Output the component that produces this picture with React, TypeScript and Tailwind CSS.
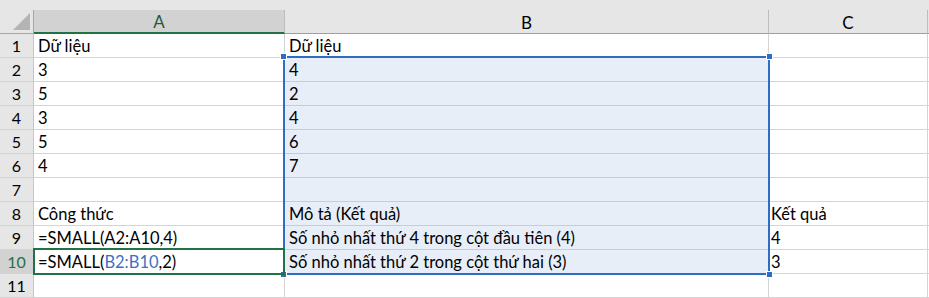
const rows: { a: React.ReactNode; b: string; c: string }[] = [
  { a: "Dữ liệu", b: "Dữ liệu", c: "" },
  { a: "3", b: "4", c: "" },
  { a: "5", b: "2", c: "" },
  { a: "3", b: "4", c: "" },
  { a: "5", b: "6", c: "" },
  { a: "4", b: "7", c: "" },
  { a: "", b: "", c: "" },
  { a: "Công thức", b: "Mô tả (Kết quả)", c: "Kết quả" },
  { a: "=SMALL(A2:A10,4)", b: "Số nhỏ nhất thứ 4 trong cột đầu tiên (4)", c: "4" },
  {
    a: (
      <>
        =SMALL(<span className="text-[#3f6fc5]">B2:B10</span>,2)
      </>
    ),
    b: "Số nhỏ nhất thứ 2 trong cột thứ hai (3)",
    c: "3",
  },
  { a: "", b: "", c: "" },
];

// small square grip on a range corner
const Handle = ({ pos }: { pos: string }) => (
  <div className={"absolute w-[7px] h-[7px] bg-[#2f6cc4] border border-white " + pos} />
);

const App = () => {
  return (
    <div className="relative w-[929px] h-[298px] bg-white overflow-hidden font-['Lato','Liberation_Sans',sans-serif] text-black">
      {/* ribbon edge above the headers */}
      <div className="h-[10px] bg-[#e6e6e6]" />

      <div className="grid grid-cols-[34px_251px_484px_159px_1px]">
        {/* corner */}
        <div className="h-[24px] bg-[#e6e6e6] border-r border-b border-[#a6a6a6] flex items-start justify-end pr-[3px] pt-[3px]">
          <svg width="17" height="17" viewBox="0 0 17 17">
            <polygon points="17,0 17,17 0,17" fill="#b4b4b4" />
          </svg>
        </div>
        <div className="h-[24px] bg-[#d2d2d2] border-r border-[#bdbdbd] border-b-2 border-b-[#217346] flex items-center justify-center text-[17px] text-[#1f5c3a] pt-[1px]">
          A
        </div>
        <div className="h-[24px] bg-[#e6e6e6] border-r border-b border-[#bdbdbd] border-b-[#9f9f9f] flex items-center justify-center text-[17px] pt-[2px]">
          B
        </div>
        <div className="h-[24px] bg-[#e6e6e6] border-r border-b border-[#bdbdbd] border-b-[#9f9f9f] flex items-center justify-center text-[17px] pt-[2px]">
          C
        </div>
        <div className="h-[24px] bg-[#e6e6e6] border-b border-[#9f9f9f]" />

        {rows.map((r, i) => {
          const n = i + 1;
          const inRange = n >= 2 && n <= 10;
          return (
            <div key={n} className="contents">
              <div
                className={
                  "h-[24px] border-r border-b border-[#c6c6c6] border-b-[#d4d4d4] flex items-center justify-center text-[16px] pt-[1px] " +
                  (n === 10 ? "bg-[#d2d2d2] text-[#217346]" : "bg-[#e6e6e6]")
                }
              >
                {n}
              </div>
              <div className="h-[24px] border-r border-b border-[#d4d4d4] flex items-center pl-[4px] text-[16.5px] pt-[1px] whitespace-nowrap">
                {r.a}
              </div>
              <div
                className={
                  "h-[24px] border-r border-b flex items-center pl-[4px] text-[16.5px] pt-[1px] whitespace-nowrap " +
                  (inRange ? "bg-[#e8eef8] border-[#c8ccd4]" : "border-[#d4d4d4]")
                }
              >
                {r.b}
              </div>
              <div className="h-[24px] border-r border-b border-[#d4d4d4] flex items-center pl-[2px] text-[16.5px] pt-[1px] whitespace-nowrap">
                {r.c}
              </div>
              <div className="h-[24px] border-b border-[#d4d4d4]" />
            </div>
          );
        })}
      </div>

      {/* referenced range B2:B10 */}
      <div className="absolute left-[283px] top-[56px] w-[487px] h-[219px] border-2 border-[#2f6cc4]">
        <Handle pos="-left-[5px] -top-[5px]" />
        <Handle pos="-right-[5px] -top-[5px]" />
        <Handle pos="-left-[5px] -bottom-[5px]" />
        <Handle pos="-right-[5px] -bottom-[5px]" />
      </div>
      {/* active cell A10 */}
      <div className="absolute left-[33px] top-[248px] w-[252px] h-[27px] border-2 border-[#217346]" />
    </div>
  );
};

export default App;
